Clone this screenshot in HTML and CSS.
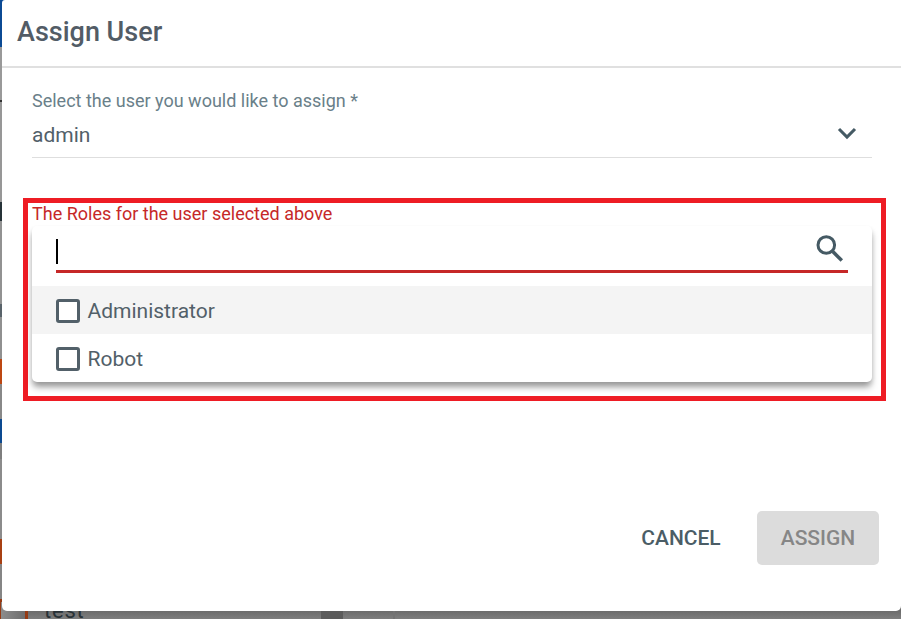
FILE: index.html
```html
<!DOCTYPE html>
<html lang="en">
<head>
<meta charset="utf-8">
<title>Assign User</title>
<link rel="stylesheet" href="styles.css">
</head>
<body>
<div class="edge" aria-hidden="true"></div>
<div class="behind" aria-hidden="true"><span class="behind-box"></span><span class="behind-text">test</span><span class="behind-thumb"></span><span class="behind-line"></span></div>
<main class="dialog">
  <header class="dialog-header"><h1>Assign User</h1></header>
  <section class="user-field">
    <label class="label">Select the user you would like to assign *</label>
    <div class="select"><span>admin</span>
      <svg class="chevron" width="20" height="13" viewBox="0 0 20 13"><path d="M2 2l8 8 8-8" fill="none" stroke="#455a64" stroke-width="3.1"/></svg>
    </div>
  </section>
  <section class="roles">
    <label class="label roles-label">The Roles for the user selected above</label>
    <div class="panel">
      <div class="search"><span class="caret"></span>
        <svg class="magnifier" width="28" height="28" viewBox="0 0 28 28"><circle cx="10.3" cy="10" r="8.3" fill="none" stroke="#455a64" stroke-width="3"/><path d="M16.8 16.6l9 9" fill="none" stroke="#455a64" stroke-width="3.5"/></svg>
      </div>
      <div class="option active"><span class="box"></span><span>Administrator</span></div>
      <div class="option"><span class="box"></span><span>Robot</span></div>
    </div>
  </section>
  <footer class="actions"><button class="cancel">CANCEL</button><button class="assign" disabled>ASSIGN</button></footer>
</main>
</body>
</html>
```
FILE: styles.css
```css
* { box-sizing: border-box; }
body { margin: 0; width: 901px; height: 619px; overflow: hidden; position: relative; background: #7d7d7d; font-family: Roboto, sans-serif; color: #526069; }
.edge { position: absolute; left: 0; top: 0; width: 8px; height: 619px; background: linear-gradient(#0b4a94 0 47px, #999 47px 100px, #333 100px 102px, #979797 102px 202px, #263238 202px 221px, #929292 221px 304px, #59636a 304px 317px, #909090 317px 359px, #bd4712 359px 384px, #888 384px 419px, #0c4a91 419px 443px, #7e7e7e 443px 459px, #8b8b8b 459px 539px, #a84013 539px 564px, #858585 564px 599px, #9d3d12 599px); }
.behind { position: absolute; left: 0; top: 599px; width: 901px; height: 20px; overflow: hidden; background: linear-gradient(#6c6c6c 12px, #7e7e7e 20px); }
.behind > span { position: absolute; }
.behind-box { left: -1px; top: 0; width: 29px; height: 30px; border: 3px solid #963b14; border-left-width: 2px; background: linear-gradient(90deg, #8c8c8c, #6e6e6e); }
.behind-text { left: 44px; top: -1px; font-size: 22px; line-height: 26px; color: #293237; letter-spacing: .8px; }
.behind-thumb { left: 321px; top: 0; width: 22px; height: 20px; background: #5b5b5b; }
.behind-line { left: 393px; top: 0; width: 2px; height: 20px; background: #737373; }
.dialog { position: relative; margin-left: 2px; width: 899px; height: 611px; background: #fff; border-radius: 3px 0 5px 5px; display: flex; flex-direction: column; }
.dialog-header { height: 68px; border-bottom: 2px solid #e0e0e0; padding: 16px 15px 0; }
h1 { margin: 0; font-size: 27px; line-height: 32px; font-weight: 500; color: #525c66; }
.label { display: block; font-size: 18px; line-height: 22px; color: #6a7f89; }
.user-field { margin: 22px 29px 0 30px; width: 840px; }
.select { height: 46px; border-bottom: 1px solid #dedede; display: flex; justify-content: space-between; padding: 10px 15px 0 0; font-size: 21px; line-height: 26px; }
.select span, .option { color: #526069; }
.chevron { margin-top: 5px; }
.roles { margin: 40px 0 0 21px; width: 863px; height: 203px; border: 5px solid #ee1c24; padding: 0 9px 0 4px; }
.roles-label { color: #c62828; height: 23px; line-height: 21px; }
.panel { width: 840px; height: 156px; border-radius: 5px; background: #fff; box-shadow: 0 6px 7px -1px rgba(0,0,0,.36), 0 3px 5px rgba(0,0,0,.1); overflow: hidden; }
.search { height: 47px; margin: 0 24px 13px; border-bottom: 3px solid #c62828; display: flex; justify-content: space-between; padding-right: 4px; }
.caret { width: 2px; height: 25px; background: #000; margin-top: 13px; }
.magnifier { margin-top: 9px; }
.option { height: 48px; display: flex; align-items: center; gap: 7.5px; padding: 2px 0 0 24px; font-size: 21px; line-height: 26px; }
.active { background: #f4f4f4; }
.box { width: 24px; height: 24px; border: 3px solid #526069; border-radius: 3px; background: #fff; }
.actions { margin: 110px 22px 0 0; display: flex; justify-content: flex-end; }
button { border: 0; padding: 0; height: 54px; font: 500 21px/24px Roboto, sans-serif; border-radius: 5px; }
.cancel { background: transparent; color: #4b5d66; width: 128px; margin-right: 12px; }
.assign { background: #dcdcdc; color: #868686; width: 122px; }
```
